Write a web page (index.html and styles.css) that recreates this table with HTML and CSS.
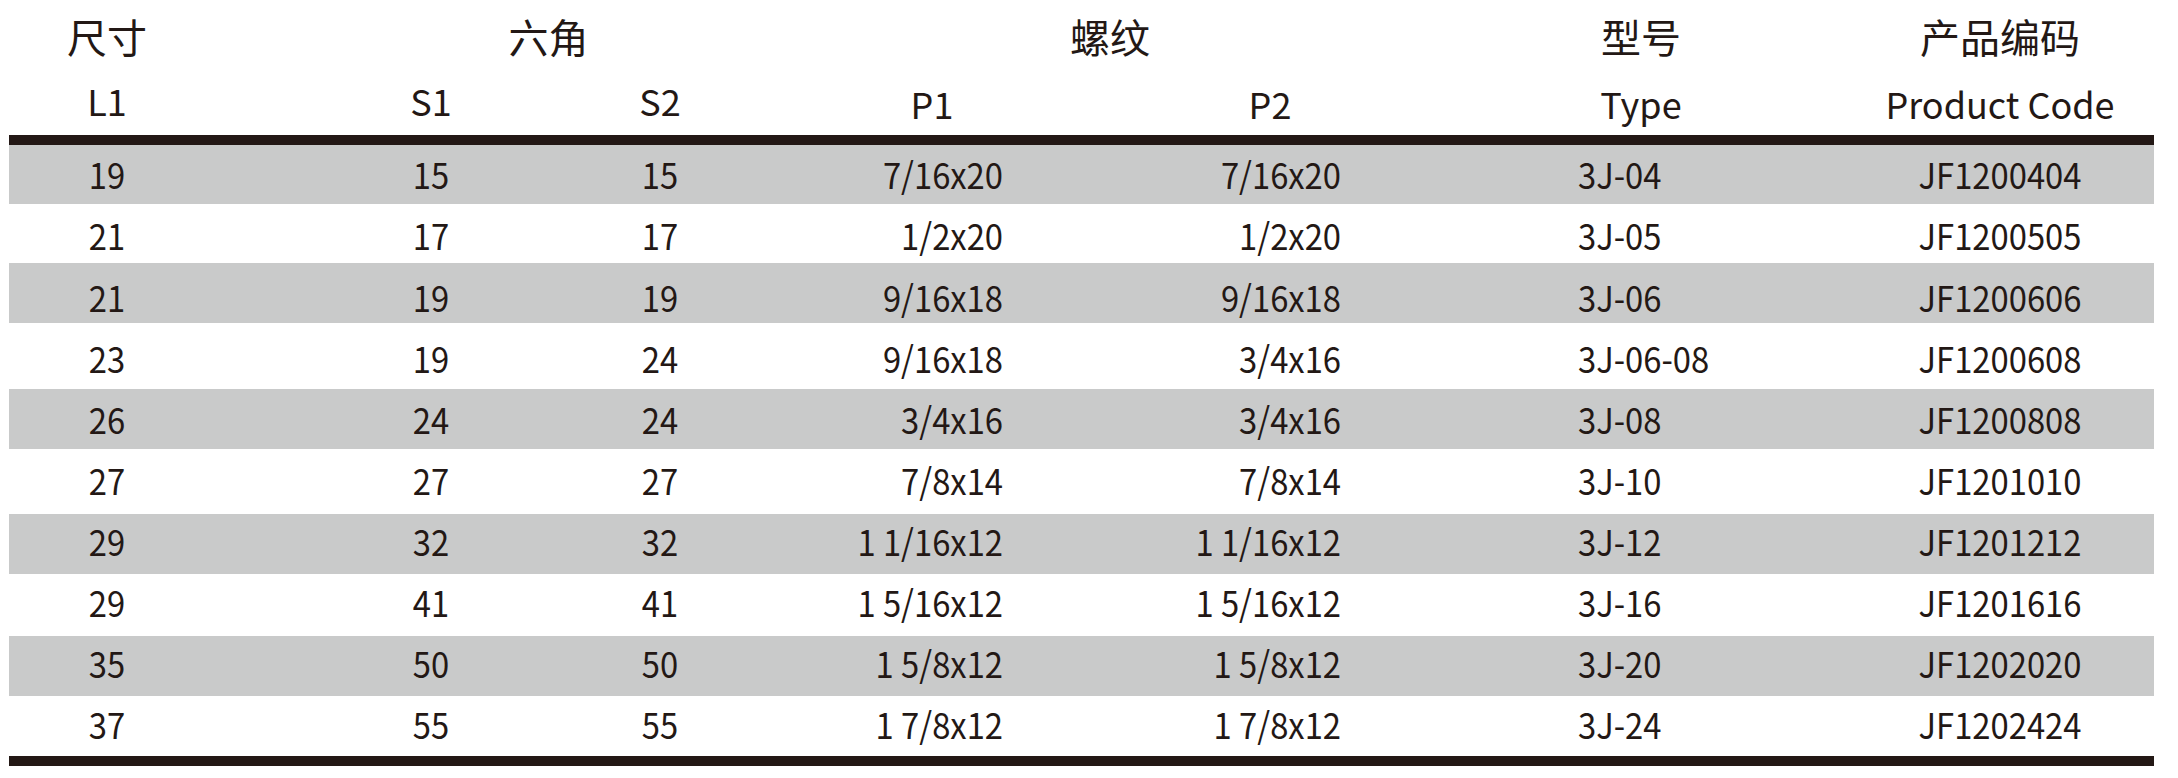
FILE: index.html
```html
<!DOCTYPE html>
<html lang="zh">
<head>
<meta charset="utf-8">
<title>规格表</title>
<link rel="stylesheet" href="styles.css">
</head>
<body>
<div class="table">
  <div class="grid head-cn">
    <div class="c1">尺寸</div>
    <div class="span-s">六角</div>
    <div class="span-p">螺纹</div>
    <div class="c6">型号</div>
    <div class="c7">产品编码</div>
  </div>
  <div class="grid head-en">
    <div class="c1 hi">L1</div>
    <div class="c2 hi">S1</div>
    <div class="c3 hi">S2</div>
    <div class="c4">P1</div>
    <div class="c5">P2</div>
    <div class="c6">Type</div>
    <div class="c7">Product Code</div>
  </div>
  <div class="rule"></div>
  <div class="body">
    <div class="grid row gray"><div class="c1">19</div><div class="c2">15</div><div class="c3">15</div><div class="c4 r">7/16x20</div><div class="c5 r">7/16x20</div><div class="c6 l">3J-04</div><div class="c7">JF1200404</div></div>
    <div class="grid row"><div class="c1">21</div><div class="c2">17</div><div class="c3">17</div><div class="c4 r">1/2x20</div><div class="c5 r">1/2x20</div><div class="c6 l">3J-05</div><div class="c7">JF1200505</div></div>
    <div class="grid row gray"><div class="c1">21</div><div class="c2">19</div><div class="c3">19</div><div class="c4 r">9/16x18</div><div class="c5 r">9/16x18</div><div class="c6 l">3J-06</div><div class="c7">JF1200606</div></div>
    <div class="grid row"><div class="c1">23</div><div class="c2">19</div><div class="c3">24</div><div class="c4 r">9/16x18</div><div class="c5 r">3/4x16</div><div class="c6 l">3J-06-08</div><div class="c7">JF1200608</div></div>
    <div class="grid row gray"><div class="c1">26</div><div class="c2">24</div><div class="c3">24</div><div class="c4 r">3/4x16</div><div class="c5 r">3/4x16</div><div class="c6 l">3J-08</div><div class="c7">JF1200808</div></div>
    <div class="grid row"><div class="c1">27</div><div class="c2">27</div><div class="c3">27</div><div class="c4 r">7/8x14</div><div class="c5 r">7/8x14</div><div class="c6 l">3J-10</div><div class="c7">JF1201010</div></div>
    <div class="grid row gray"><div class="c1">29</div><div class="c2">32</div><div class="c3">32</div><div class="c4 r">1 1/16x12</div><div class="c5 r">1 1/16x12</div><div class="c6 l">3J-12</div><div class="c7">JF1201212</div></div>
    <div class="grid row"><div class="c1">29</div><div class="c2">41</div><div class="c3">41</div><div class="c4 r">1 5/16x12</div><div class="c5 r">1 5/16x12</div><div class="c6 l">3J-16</div><div class="c7">JF1201616</div></div>
    <div class="grid row gray"><div class="c1">35</div><div class="c2">50</div><div class="c3">50</div><div class="c4 r">1 5/8x12</div><div class="c5 r">1 5/8x12</div><div class="c6 l">3J-20</div><div class="c7">JF1202020</div></div>
    <div class="grid row"><div class="c1">37</div><div class="c2">55</div><div class="c3">55</div><div class="c4 r">1 7/8x12</div><div class="c5 r">1 7/8x12</div><div class="c6 l">3J-24</div><div class="c7">JF1202424</div></div>
  </div>
  <div class="rule"></div>
</div>
</body>
</html>
```

FILE: styles.css
```css
html, body {
  margin: 0;
  padding: 0;
  background: #ffffff;
}

body {
  padding-left: 9px;
  font-family: "Noto Sans CJK SC", "Noto Sans", sans-serif;
  color: #231815;
}

.table {
  width: 2145px;
}

.grid {
  display: grid;
  grid-template-columns: 196px 126px 200px 29px 200px 72px 200px 138px 200px 171px 200px 129px 260px 24px;
  align-items: center;
  white-space: pre;
}

.grid > div {
  text-align: center;
}

.c1 { grid-column: 1; }
.c2 { grid-column: 3; }
.c3 { grid-column: 5; }
.c4 { grid-column: 7; }
.c5 { grid-column: 9; }
.c6 { grid-column: 11; }
.c7 { grid-column: 13; }
.span-s { grid-column: 3 / 6; padding-left: 6px; }
.span-p { grid-column: 7 / 10; padding-left: 18px; }

.head-cn {
  height: 76px;
  font-size: 40px;
  line-height: 76px;
}

.head-cn > div {
  position: relative;
  top: -2px;
}

.head-en {
  height: 59px;
  font-size: 36px;
  line-height: 59px;
}

.head-en > div {
  position: relative;
  top: -2px;
}

.head-en > .hi {
  top: -5px;
}

.rule {
  height: 10px;
  background: #231815;
}

.row {
  --h: 60px;
  --dy: 0px;
  height: var(--h);
  font-size: 36px;
  line-height: var(--h);
}

.row.gray {
  background: #c9caca;
}

.row:nth-child(1)  { --h: 59px; --dy: -1px; }
.row:nth-child(2)  { --h: 59px; --dy: 1px; }
.row:nth-child(3)  { --h: 60px; --dy: 3px; }
.row:nth-child(4)  { --h: 66px; --dy: 1px; }
.row:nth-child(5)  { --h: 60px; --dy: -1px; }
.row:nth-child(6)  { --h: 65px; --dy: -2px; }
.row:nth-child(7)  { --h: 60px; --dy: -4px; }
.row:nth-child(8)  { --h: 62px; --dy: -4px; }
.row:nth-child(9)  { --h: 60px; --dy: -4px; }
.row:nth-child(10) { --h: 60px; --dy: -3px; }

.row > div {
  transform: translateY(var(--dy)) scaleX(0.91);
  transform-origin: 50% 50%;
}

.row > .r {
  text-align: right;
  padding-right: 29px;
  transform-origin: calc(100% - 29px) 50%;
}

.row > .l {
  text-align: left;
  padding-left: 37px;
  transform-origin: 37px 50%;
}
```
